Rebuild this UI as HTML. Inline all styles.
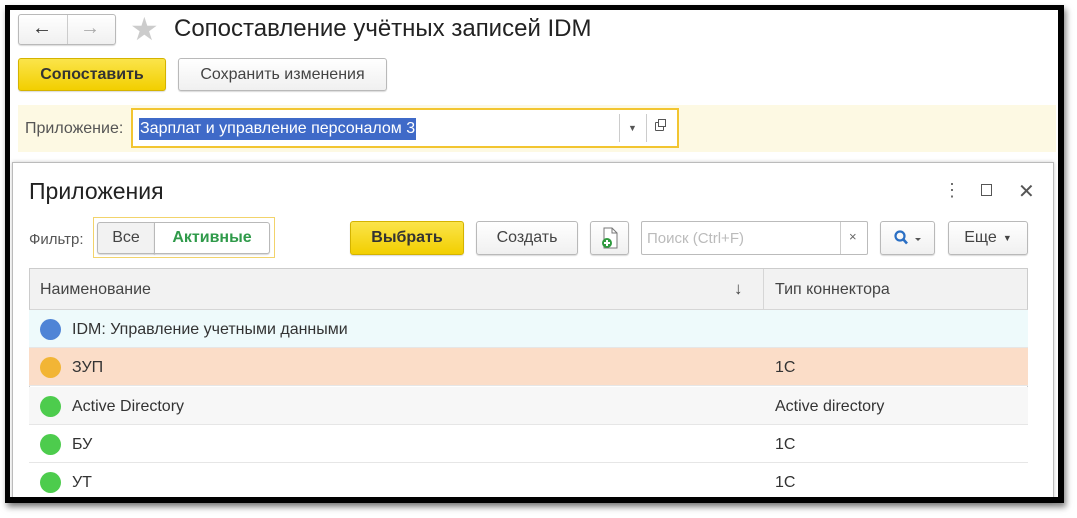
<!DOCTYPE html>
<html><head><meta charset="utf-8"><style>
*{box-sizing:border-box}
body{margin:0;width:1077px;height:518px;background:#fff;font-family:"Liberation Sans",Arial,sans-serif;position:relative;overflow:hidden;color:#333}
.a{position:absolute}
.frame{left:5px;top:5px;width:1059px;height:498px;border:5px solid #000;background:#fff;box-shadow:2px 4px 6px rgba(0,0,0,.5)}
.btn{position:absolute;border:1px solid #b9b9b9;border-radius:3px;background:linear-gradient(#fff,#f0f0f0);box-shadow:0 1px 1px rgba(0,0,0,.15);font-size:16px;color:#444;display:flex;align-items:center;justify-content:center}
.yb{background:linear-gradient(#fbe44a,#f2cf00);border-color:#d4b300;font-weight:bold;color:#333}
.row{position:absolute;left:29px;width:999px;height:38px;border-bottom:1px solid #e6e6e6;font-size:16px}
.dot{position:absolute;left:11px;top:9px;width:21px;height:21px;border-radius:50%}
.row .t1{position:absolute;left:43px;top:11px}
.row .t2{position:absolute;left:746px;top:11px}
</style></head><body>
<div class="a frame"></div>
<div class="btn" style="left:18px;top:14px;width:98px;height:31px;padding:0"></div>
<div class="a" style="left:67px;top:15px;width:1px;height:29px;background:#ccc"></div>
<div class="a" style="left:32px;top:17px;font-size:20px;color:#333">&#8592;</div>
<div class="a" style="left:80px;top:17px;font-size:20px;color:#aaa">&#8594;</div>
<div class="a" style="left:130px;top:10px;font-size:32px;color:#ccc">&#9733;</div>
<div class="a" style="left:174px;top:15px;font-size:24px;color:#222">Сопоставление учётных записей IDM</div>
<div class="btn yb" style="left:18px;top:58px;width:148px;height:33px">Сопоставить</div>
<div class="btn" style="left:178px;top:58px;width:209px;height:33px">Сохранить изменения</div>
<div class="a" style="left:18px;top:105px;width:1038px;height:47px;background:#fdf9e3"></div>
<div class="a" style="left:25px;top:120px;font-size:16px;color:#555">Приложение:</div>
<div class="a" style="left:131px;top:108px;width:548px;height:40px;border:2px solid #f2c530;background:#fff"></div>
<div class="a" style="left:139px;top:118px;height:22px;padding:2px 1px;background:#3f6ac8;color:#fff;font-size:16px;line-height:18px">Зарплат и управление персоналом 3</div>
<div class="a" style="left:619px;top:114px;width:1px;height:28px;background:#ccc"></div>
<div class="a" style="left:646px;top:114px;width:1px;height:28px;background:#ccc"></div>
<div class="a" style="left:628px;top:123px;font-size:9px;color:#555">&#9660;</div>
<div class="a" style="left:655px;top:122px;width:9px;height:9px;border:1px solid #555;border-radius:1px"></div>
<div class="a" style="left:658px;top:119px;width:8px;height:8px;border:1px solid #555;background:#fff"></div>
<div class="a" style="left:12px;top:162px;width:1042px;height:340px;border:1px solid #bbb;border-bottom:none;background:#fff;box-shadow:0 0 4px rgba(0,0,0,.2)"></div>
<div class="a" style="left:29px;top:178px;font-size:23px;color:#222">Приложения</div>
<div class="a" style="left:943px;top:181px;font-size:18px;color:#666;line-height:18px">&#8942;</div>
<div class="a" style="left:981px;top:184px;width:11px;height:12px;border:1.5px solid #555"></div>
<div class="a" style="left:1018px;top:179px;font-size:20px;color:#555">&#10005;</div>
<div class="a" style="left:29px;top:231px;font-size:15px;color:#555">Фильтр:</div>
<div class="a" style="left:93px;top:217px;width:182px;height:41px;border:1px solid #f2d36b"></div>
<div class="btn" style="left:97px;top:222px;width:58px;height:32px;border-radius:3px 0 0 3px;background:#f2f2f2">Все</div>
<div class="btn" style="left:154px;top:222px;width:116px;height:32px;border-radius:0 3px 3px 0;background:#fff;color:#2f9a4a;font-weight:bold">Активные</div>
<div class="btn yb" style="left:350px;top:221px;width:114px;height:34px">Выбрать</div>
<div class="btn" style="left:476px;top:221px;width:102px;height:34px">Создать</div>
<div class="btn" style="left:590px;top:221px;width:39px;height:34px">
<svg width="18" height="22" viewBox="0 0 18 22"><path d="M3 1h8l5 5v15H3z" fill="#fff" stroke="#777"/><path d="M11 1v5h5" fill="none" stroke="#777"/><circle cx="6" cy="16" r="5" fill="#2e9a3e"/><path d="M6 13v6M3 16h6" stroke="#fff" stroke-width="2"/></svg></div>
<div class="a" style="left:641px;top:221px;width:227px;height:34px;border:1px solid #bbb;border-radius:2px;background:#fff"></div>
<div class="a" style="left:840px;top:222px;width:1px;height:32px;background:#ccc"></div>
<div class="a" style="left:647px;top:230px;font-size:15px;color:#bbb">Поиск (Ctrl+F)</div>
<div class="a" style="left:849px;top:229px;font-size:13px;color:#666">×</div>
<div class="btn" style="left:880px;top:221px;width:55px;height:34px">
<svg width="30" height="16" viewBox="0 0 30 16"><circle cx="7" cy="6" r="4.5" fill="none" stroke="#2a6fc4" stroke-width="2.2"/><path d="M10 9l4 4.5" stroke="#2a6fc4" stroke-width="2.6"/><path d="M22 8h6l-3 3z" fill="#555"/></svg></div>
<div class="btn" style="left:948px;top:221px;width:80px;height:34px">Еще <span style="font-size:9px;margin-left:6px">&#9660;</span></div>
<div class="a" style="left:29px;top:268px;width:999px;height:234px;border:1px solid #ccc;border-bottom:none"></div>
<div class="a" style="left:29px;top:268px;width:999px;height:42px;background:#f2f2f2;border:1px solid #ccc;border-bottom:1px solid #d6d6d6"></div>
<div class="a" style="left:763px;top:269px;width:1px;height:41px;background:#d6d6d6"></div>
<div class="a" style="left:40px;top:281px;font-size:16px;color:#444">Наименование</div>
<div class="a" style="left:734px;top:279px;font-size:17px;color:#444">&#8595;</div>
<div class="a" style="left:775px;top:281px;font-size:16px;color:#444">Тип коннектора</div>
<div class="row" style="top:310px;background:#eefafb"><div class="dot" style="background:#4f84d6"></div><span class="t1">IDM: Управление учетными данными</span></div>
<div class="row" style="top:348px;background:#fbddc8"><div class="dot" style="background:#f2b535"></div><span class="t1">ЗУП</span><span class="t2">1С</span></div>
<div class="row" style="top:387px;background:#f7f7f7"><div class="dot" style="background:#4dcc4d"></div><span class="t1">Active Directory</span><span class="t2">Active directory</span></div>
<div class="row" style="top:425px;background:#fff"><div class="dot" style="background:#4dcc4d"></div><span class="t1">БУ</span><span class="t2">1С</span></div>
<div class="row" style="top:463px;background:#fff;border:none"><div class="dot" style="background:#4dcc4d"></div><span class="t1">УТ</span><span class="t2">1С</span></div>
<div class="a" style="left:5px;top:497px;width:1059px;height:6px;background:#000"></div>
<div class="a" style="left:1058px;top:5px;width:6px;height:498px;background:#000"></div>
</body></html>
